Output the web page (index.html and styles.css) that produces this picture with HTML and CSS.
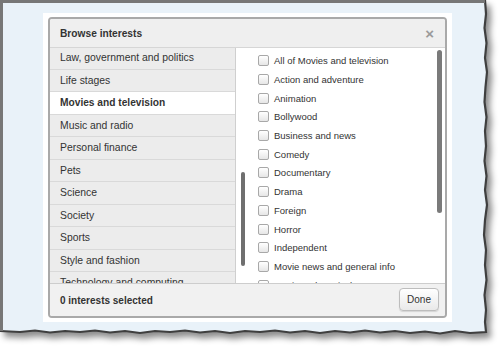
FILE: index.html
```html
<!DOCTYPE html>
<html lang="en">
<head>
    <meta charset="UTF-8">
    <title>Browse interests</title>
    <link rel="stylesheet" href="styles.css">
</head>
<body>
    <div class="paper">
        <!-- torn paper background -->
        <svg class="paper-bg" width="500" height="349" viewBox="0 0 500 349">
            <g class="paper-shape">
                <path fill="#e9f2f9" d="M0,0 H485 L486,14 L484.5,28 L486.5,43 L485,58 L487,72 L485.5,87 L484.5,102 L486.5,117 L485,131 L486,146 L484.5,161 L486.5,176 L485,190 L487,205 L485,220 L484,235 L486,250 L485,265 L486.5,280 L484.5,295 L486,310 L485,322 L486,332 L470,333 L455,331 L440,333.5 L425,331.5 L410,333 L395,331 L380,332.5 L365,330.5 L350,332.5 L335,331 L320,333 L305,331 L290,332.5 L275,330.5 L260,332 L245,331 L230,333 L215,331 L200,332.5 L185,330.5 L170,332 L155,331 L140,333 L125,331 L110,332.5 L95,330.5 L80,332 L65,331 L50,332.5 L35,330.5 L20,332 L0,331 Z"/>
                <path fill="none" stroke="#3f3f3f" stroke-width="2.2" d="M485,0 L486,14 L484.5,28 L486.5,43 L485,58 L487,72 L485.5,87 L484.5,102 L486.5,117 L485,131 L486,146 L484.5,161 L486.5,176 L485,190 L487,205 L485,220 L484,235 L486,250 L485,265 L486.5,280 L484.5,295 L486,310 L485,322 L486,332 L470,333 L455,331 L440,333.5 L425,331.5 L410,333 L395,331 L380,332.5 L365,330.5 L350,332.5 L335,331 L320,333 L305,331 L290,332.5 L275,330.5 L260,332 L245,331 L230,333 L215,331 L200,332.5 L185,330.5 L170,332 L155,331 L140,333 L125,331 L110,332.5 L95,330.5 L80,332 L65,331 L50,332.5 L35,330.5 L20,332 L0,331"/>
                <path fill="none" stroke="#777" stroke-width="3" d="M1.5,331 V1.5 H485"/>
            </g>
        </svg>

        <div class="frame">
            <div class="modal">
                <div class="modal-header">
                    <span class="modal-title">Browse interests</span>
                    <span class="close">&times;</span>
                </div>
                <div class="modal-body">
                    <ul class="categories">
                        <li>Law, government and politics</li>
                        <li>Life stages</li>
                        <li class="active">Movies and television</li>
                        <li>Music and radio</li>
                        <li>Personal finance</li>
                        <li>Pets</li>
                        <li>Science</li>
                        <li>Society</li>
                        <li>Sports</li>
                        <li>Style and fashion</li>
                        <li>Technology and computing</li>
                    </ul>
                    <ul class="options">
                        <li><span class="check"></span>All of Movies and television</li>
                        <li><span class="check"></span>Action and adventure</li>
                        <li><span class="check"></span>Animation</li>
                        <li><span class="check"></span>Bollywood</li>
                        <li><span class="check"></span>Business and news</li>
                        <li><span class="check"></span>Comedy</li>
                        <li><span class="check"></span>Documentary</li>
                        <li><span class="check"></span>Drama</li>
                        <li><span class="check"></span>Foreign</li>
                        <li><span class="check"></span>Horror</li>
                        <li><span class="check"></span>Independent</li>
                        <li><span class="check"></span>Movie news and general info</li>
                        <li><span class="check"></span>Music and musicals</li>
                    </ul>
                    <div class="scrollbar scrollbar-left"></div>
                    <div class="scrollbar scrollbar-right"></div>
                </div>
                <div class="modal-footer">
                    <span class="count">0 interests selected</span>
                    <button class="done">Done</button>
                </div>
            </div>
        </div>
    </div>
</body>
</html>
```

FILE: styles.css
```css
body {
    margin: 0;
    background-color: #fff;
    font-family: "Liberation Sans", Arial, sans-serif;
    color: #333;
}

.paper {
    position: relative;
    width: 500px;
    height: 349px;
    padding: 13px 0 0 43px;
    box-sizing: border-box;
}

.paper-bg {
    position: absolute;
    left: 0;
    top: 0;
}

.paper-shape {
    filter: drop-shadow(4px 5px 3px rgba(0, 0, 0, 0.45));
}

.frame {
    position: relative;
    width: 409px;
    height: 309px;
    padding: 4px 5px;
    box-sizing: border-box;
    background-color: #fff;
}

.modal {
    height: 301px;
    border: 2px solid #a9a9a9;
    border-radius: 4px;
    box-sizing: border-box;
    display: flex;
    flex-direction: column;
    overflow: hidden;
    background-color: #fff;
}

.modal-header {
    height: 29px;
    flex: none;
    box-sizing: border-box;
    border-bottom: 1px solid #d6d6d6;
    background-color: #efefef;
    display: flex;
    align-items: center;
    justify-content: space-between;
    padding: 1px 10px 0 10px;
}

.modal-title {
    font-size: 10.2px;
    font-weight: bold;
    color: #333;
}

.close {
    font-size: 15px;
    font-weight: bold;
    color: #9a9a9a;
    line-height: 1;
    margin-right: 1px;
}

.modal-body {
    position: relative;
    height: 235px;
    flex: none;
    display: flex;
    overflow: hidden;
}

.categories {
    list-style: none;
    margin: -1px 0 0 0;
    padding: 0;
    width: 186px;
    flex: none;
    box-sizing: border-box;
    border-right: 1px solid #cfcfcf;
    background-color: #ececec;
}

.categories li {
    height: 22.5px;
    box-sizing: border-box;
    border-bottom: 1px solid #d9d9d9;
    padding-left: 10px;
    display: flex;
    align-items: center;
    font-size: 10.4px;
    color: #333;
    background-color: #ececec;
}

.categories li.active {
    background-color: #fff;
    font-weight: bold;
    font-size: 10.2px;
}

.options {
    list-style: none;
    margin: 0;
    padding: 3.5px 0 0 22px;
    flex: 1;
}

.options li {
    height: 18.7px;
    display: flex;
    align-items: center;
    font-size: 9.5px;
    color: #333;
}

.check {
    width: 9px;
    height: 9px;
    border: 1px solid #a8a8a8;
    border-radius: 2px;
    background: linear-gradient(#fff, #e6e6e6);
    margin-right: 5px;
    flex: none;
}

.scrollbar {
    position: absolute;
    background-color: #6f6f6f;
    border-radius: 3px;
}

.scrollbar-left {
    left: 191px;
    top: 124px;
    width: 4px;
    height: 94px;
}

.scrollbar-right {
    left: 387px;
    top: 2px;
    width: 5px;
    height: 163px;
    background-color: #7a7a7a;
}

.modal-footer {
    flex: 1;
    box-sizing: border-box;
    border-top: 1px solid #cdcdcd;
    background-color: #f1f1f1;
    display: flex;
    align-items: center;
    justify-content: space-between;
    padding: 0 6px 0 10px;
}

.count {
    font-size: 10px;
    font-weight: bold;
    color: #333;
}

.done {
    width: 40px;
    height: 23px;
    padding: 0;
    margin-top: -2px;
    font-family: "Liberation Sans", Arial, sans-serif;
    font-size: 10px;
    color: #333;
    border: 1px solid #bdbdbd;
    border-radius: 4px;
    background: linear-gradient(#ffffff, #e9e9e9);
    box-shadow: 0 1px 1px rgba(0, 0, 0, 0.12);
}
```
